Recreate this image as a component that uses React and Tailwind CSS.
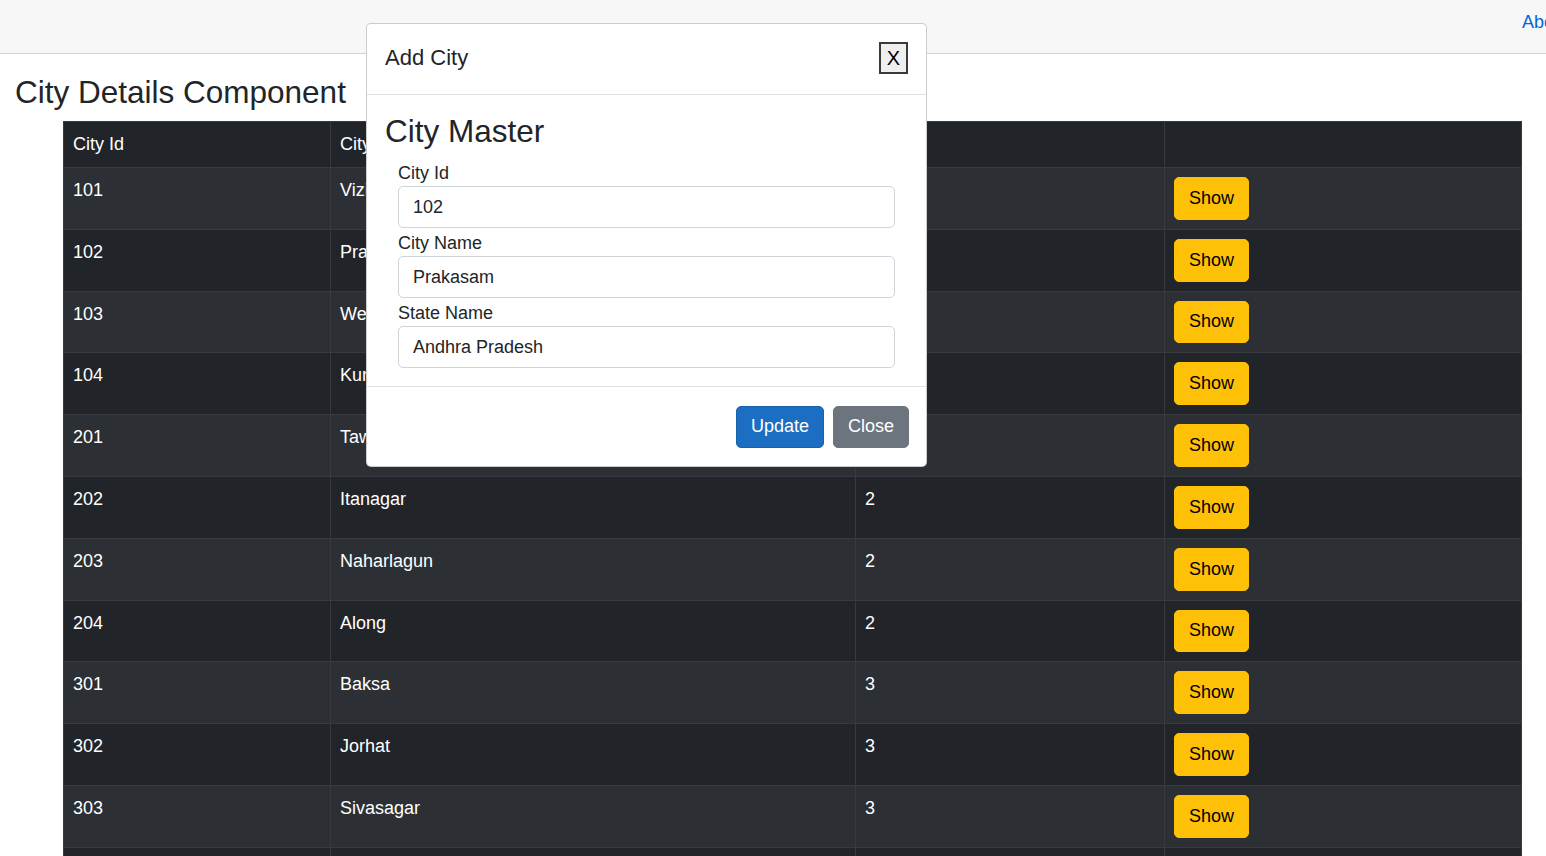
import React from "react";

const rows = [
  ["101", "Vizianagaram", "1"],
  ["102", "Prakasam", "1"],
  ["103", "West Godavari", "1"],
  ["104", "Kurnool", "1"],
  ["201", "Tawang", "2"],
  ["202", "Itanagar", "2"],
  ["203", "Naharlagun", "2"],
  ["204", "Along", "2"],
  ["301", "Baksa", "3"],
  ["302", "Jorhat", "3"],
  ["303", "Sivasagar", "3"],
  ["304", "Dibrugarh", "3"],
];

function Field({ label, value }) {
  return (
    <div>
      <label className="block leading-[28px] pt-[1px] h-[28px] text-[18px] text-[#212529]">{label}</label>
      <input
        readOnly
        value={value}
        className="block w-full h-[42px] px-[14px] border border-[#ced4da] rounded-[5px] text-[18px] text-[#212529] bg-white outline-none"
        style={{ fontFamily: "'Liberation Sans', Arial, sans-serif" }}
      />
    </div>
  );
}

export default function App() {
  return (
    <div
      className="relative w-[1546px] h-[856px] overflow-hidden bg-white text-[#212529]"
      style={{ fontFamily: "'Liberation Sans', Arial, sans-serif" }}
    >
      <div className="h-[54px] bg-[#f7f7f7] border-b border-[#d6d5d5] flex items-start">
        <a className="ml-[1522px] mt-[9px] whitespace-nowrap text-[18px] leading-[27px] text-[#0366d6]">About</a>
      </div>

      <h3 className="ml-[15px] mt-[20px] text-[31.5px] leading-[37px] font-normal text-[#212529]">
        City Details Component
      </h3>

      <table className="ml-[63px] mt-[10px] w-[1458px] table-fixed border-collapse text-[18px] leading-[27px] text-white">
        <colgroup>
          <col className="w-[267px]" />
          <col className="w-[525px]" />
          <col className="w-[309px]" />
          <col className="w-[357px]" />
        </colgroup>
        <thead>
          <tr className="bg-[#212529]">
            <th className="border border-[#373b3e] px-[9px] py-[9px] text-left font-normal align-top">City Id</th>
            <th className="border border-[#373b3e] px-[9px] py-[9px] text-left font-normal align-top">City Name</th>
            <th className="border border-[#373b3e] px-[9px] py-[9px] text-left font-normal align-top">State Id</th>
            <th className="border border-[#373b3e] px-[9px] py-[9px] text-left font-normal align-top"></th>
          </tr>
        </thead>
        <tbody>
          {rows.map((r, i) => (
            <tr key={r[0]} className={i % 2 === 0 ? "bg-[#2c3034]" : "bg-[#212529]"}>
              <td className="border border-[#373b3e] px-[9px] py-[9px] align-top">{r[0]}</td>
              <td className="border border-[#373b3e] px-[9px] py-[9px] align-top">{r[1]}</td>
              <td className="border border-[#373b3e] px-[9px] py-[9px] align-top">{r[2]}</td>
              <td className="border border-[#373b3e] px-[9px] py-[9px] align-top">
                <button className="h-[42.8px] px-[14px] bg-[#ffc107] border border-[#ffc107] rounded-[5px] text-black text-[18px] leading-[27px]">
                  Show
                </button>
              </td>
            </tr>
          ))}
        </tbody>
      </table>

      <div className="absolute left-[366px] top-[23px] w-[561px] bg-white border border-[rgba(0,0,0,0.2)] rounded-[5px]">
        <div className="h-[71px] border-b border-[#dee2e6] flex items-center justify-between px-[18px]">
          <span className="text-[22px] leading-[33px] text-[#212529] mt-[-3px]">Add City</span>
          <button className="w-[29px] h-[32px] mt-[-3px] bg-[#efefef] border-2 border-[#3a3a3a] text-[20px] leading-none text-black flex items-center justify-center">
            X
          </button>
        </div>
        <div className="px-[18px] pt-[18px] pb-[18px]">
          <h3 className="text-[31.5px] leading-[37px] font-normal text-[#212529] mb-[8px]">City Master</h3>
          <div className="px-[13px]">
            <Field label="City Id" value="102" />
            <Field label="City Name" value="Prakasam" />
            <Field label="State Name" value="Andhra Pradesh" />
          </div>
        </div>
        <div className="h-[80px] border-t border-[#dee2e6] flex items-center justify-end gap-[9px] pr-[17px]">
          <button className="h-[42px] px-[14px] bg-[#1b6ec2] border border-[#1861ac] rounded-[5px] text-white text-[18px] leading-[27px]">
            Update
          </button>
          <button className="h-[42px] px-[14px] bg-[#6c757d] border border-[#6c757d] rounded-[5px] text-white text-[18px] leading-[27px]">
            Close
          </button>
        </div>
      </div>
    </div>
  );
}
